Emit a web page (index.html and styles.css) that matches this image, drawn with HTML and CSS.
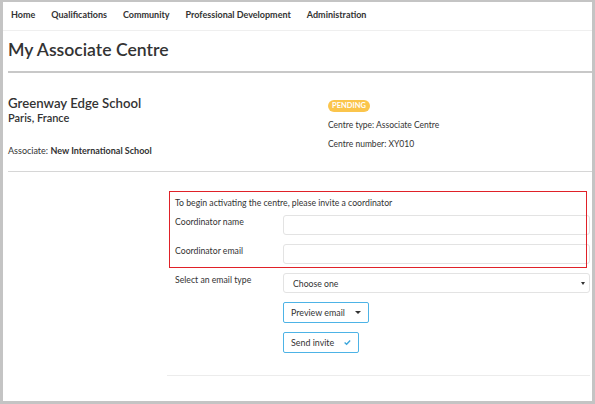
FILE: index.html
```html
<!DOCTYPE html>
<html>
<head>
<meta charset="utf-8">
<link rel="stylesheet" href="styles.css">
</head>
<body>
<div class="page">
  <nav class="nav">
    <a>Home</a>
    <a>Qualifications</a>
    <a>Community</a>
    <a>Professional Development</a>
    <a>Administration</a>
  </nav>
  <div class="content">
    <h1 class="title">My Associate Centre</h1>
    <section class="info">
      <div class="info-left">
        <div class="school">Greenway Edge School</div>
        <div class="city">Paris, France</div>
        <div class="assoc">Associate: <b>New International School</b></div>
      </div>
      <div class="info-right">
        <span class="badge">PENDING</span>
        <div class="meta">Centre type: Associate Centre</div>
        <div class="meta">Centre number: XY010</div>
      </div>
    </section>
    <section class="form">
      <div class="highlight"></div>
      <div class="intro">To begin activating the centre, please invite a coordinator</div>
      <div class="row">
        <label class="lbl">Coordinator name</label>
        <div class="input"></div>
      </div>
      <div class="row">
        <label class="lbl">Coordinator email</label>
        <div class="input"></div>
      </div>
      <div class="row">
        <label class="lbl">Select an email type</label>
        <div class="input select"><span>Choose one</span><span class="caret-sm"></span></div>
      </div>
      <div class="row">
        <span></span>
        <div class="cell"><button class="btn btn-preview">Preview email <span class="caret"></span></button></div>
      </div>
      <div class="row">
        <span></span>
        <div class="cell"><button class="btn btn-send">Send invite <svg class="check" width="11" height="9" viewBox="0 0 11 9"><path d="M1 4.6 L4.2 7.4 L10 1.4" fill="none" stroke="#3ba6dc" stroke-width="2.2"/></svg></button></div>
      </div>
    </section>
  </div>
</div>
</body>
</html>
```

FILE: styles.css
```css
* { box-sizing: border-box; }
html, body { margin: 0; padding: 0; }
body {
  background: #c4c4c4;
  font-family: "Lato", "Liberation Sans", sans-serif;
  color: #333;
  width: 595px;
  height: 404px;
  overflow: hidden;
}
.page {
  margin: 2px 3px 0 3px;
  height: 399px;
  background: #fff;
  position: relative;
}
.nav {
  height: 29px;
  border-bottom: 1px solid #efefef;
  display: flex;
  align-items: center;
  padding-left: 8px;
  padding-bottom: 3px;
  font-size: 9px;
  font-weight: 700;
}
.nav a { margin-right: 16px; color: #333; white-space: nowrap; }
.content { padding-left: 5px; }
.title {
  margin: 0;
  font-size: 17.6px;
  font-weight: 600;
  line-height: 24px;
  padding-top: 7px;
  height: 42px;
  border-bottom: 2px solid #c8c8c8;
}
.info {
  display: flex;
  height: 99px;
  border-bottom: 1px solid #d6d6d6;
}
.info-left { width: 320px; padding-top: 22px; }
.school { font-size: 13.2px; font-weight: 600; line-height: 16px; }
.city { font-size: 11px; font-weight: 600; line-height: 14px; }
.assoc { font-size: 9px; line-height: 12px; margin-top: 20px; }
.info-right {
  padding-top: 27px;
  display: flex;
  flex-direction: column;
  align-items: flex-start;
}
.badge {
  display: block;
  background: #fbc54c;
  color: #fff;
  font-size: 7.5px;
  font-weight: 700;
  line-height: 12px;
  height: 12px;
  padding: 0 4px;
  border-radius: 6px;
}
.meta { font-size: 8.5px; line-height: 12px; margin-top: 7px; }
.form {
  margin-left: 159px;
  margin-right: 2px;
  position: relative;
  padding: 25px 0 22px 8px;
  border-bottom: 1px solid #ececec;
  display: flex;
  flex-direction: column;
  gap: 9px;
}
.highlight {
  position: absolute;
  left: 2px;
  top: 19px;
  width: 418px;
  height: 77px;
  border: 1px solid #e02128;
  pointer-events: none;
}
.intro { font-size: 8.7px; line-height: 12px; margin-bottom: -3px; }
.row { display: grid; grid-template-columns: 108px 1fr; }
.cell { display: flex; }
.lbl { font-size: 8.7px; line-height: 14px; }
.input {
  height: 20px;
  border: 1px solid #e3e3e3;
  border-radius: 3px;
  background: #fff;
}
.select {
  display: flex;
  align-items: center;
  justify-content: space-between;
  padding: 0 4px 0 9px;
  font-size: 8.7px;
}
.caret-sm {
  width: 0; height: 0;
  border-left: 2.5px solid transparent;
  border-right: 2.5px solid transparent;
  border-top: 3px solid #333;
}
.btn {
  font-family: inherit;
  font-size: 8.9px;
  color: #333;
  background: #fff;
  border: 1px solid #4db3e6;
  border-radius: 2px;
  height: 21px;
  padding: 0 7px;
  display: inline-flex;
  align-items: center;
  white-space: nowrap;
}
.btn-preview { width: 86px; }
.btn-send { width: 76px; }
.caret {
  display: inline-block;
  margin-left: 10px;
  width: 0; height: 0;
  border-left: 3px solid transparent;
  border-right: 3px solid transparent;
  border-top: 3.5px solid #333;
}
.check { margin-left: 10px; }
```
